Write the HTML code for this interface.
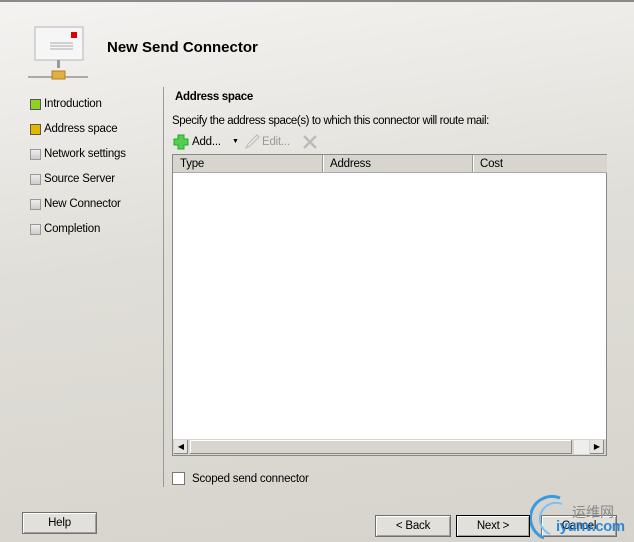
<!DOCTYPE html>
<html><head><style>
body{margin:0;width:634px;height:542px;overflow:hidden;position:relative;font-family:"Liberation Sans",sans-serif;font-size:11.5px;color:#000;
background:linear-gradient(172deg,#f4f3f1 0%,#eceae6 20%,#e0ded8 45%,#d6d3cc 100%);}
.a{position:absolute;white-space:nowrap}
.n{letter-spacing:-0.2px}
.step{position:absolute;left:30px;font-size:11.5px;height:14px}
.step i{position:absolute;left:0;top:1px;width:9px;height:9px;border:1px solid #999;background:linear-gradient(#eee,#ccc)}
.step span{position:absolute;left:14px;top:0px;white-space:nowrap}
.btn{position:absolute;height:20px;border:1px solid #707070;background:#e2e0da;box-shadow:inset 1px 1px 0 #fff,inset -1px -1px 0 #a0a0a0;text-align:center;line-height:20px;font-size:11.5px}
</style></head><body>
<div class="a" style="left:0;top:0;width:634px;height:2px;background:#8a8a8a"></div>
<svg class="a" style="left:26px;top:26px" width="64" height="56">
<rect x="9" y="1" width="48" height="33" fill="#f6f6f6" stroke="#b5b5b5"/>
<rect x="45" y="6" width="6" height="6" fill="#d00"/>
<line x1="24" y1="17" x2="47" y2="17" stroke="#aaa"/><line x1="24" y1="20" x2="47" y2="20" stroke="#aaa"/><line x1="24" y1="23" x2="47" y2="23" stroke="#aaa"/>
<rect x="31" y="34" width="3" height="8" fill="#999"/>
<line x1="2" y1="51" x2="62" y2="51" stroke="#aaa" stroke-width="2"/>
<rect x="26" y="45" width="13" height="8" fill="#e0b040" stroke="#b08020"/>
</svg>
<div class="a" style="left:107px;top:39px;font-size:15px;font-weight:bold">New Send Connector</div>
<div class="step n" style="top:98px"><i style="background:#8fd020;border-color:#556"></i><span>Introduction</span></div>
<div class="step n" style="top:123px"><i style="background:#e0b800;border-color:#654"></i><span>Address space</span></div>
<div class="step n" style="top:148px"><i></i><span>Network settings</span></div>
<div class="step n" style="top:173px"><i></i><span>Source Server</span></div>
<div class="step n" style="top:198px"><i></i><span>New Connector</span></div>
<div class="step n" style="top:223px"><i></i><span>Completion</span></div>
<div class="a" style="left:163px;top:87px;width:1px;height:400px;background:#999"></div>
<div class="a" style="left:175px;top:91px;font-weight:bold;font-size:11.5px;letter-spacing:-0.3px">Address space</div>
<div class="a" style="left:172px;top:115px;font-size:11.5px;letter-spacing:-0.4px">Specify the address space(s) to which this connector will route mail:</div>
<svg class="a" style="left:173px;top:134px" width="16" height="16"><path d="M5 1h6v4h4v6h-4v4h-6v-4h-4v-6h4z" fill="#5c5" stroke="#2a2"/></svg>
<div class="a n" style="left:192px;top:136px">Add...</div>
<div class="a" style="left:232px;top:138px;font-size:7px">▼</div>
<svg class="a" style="left:244px;top:134px" width="16" height="16"><path d="M2 14l2-4 9-9 2 2-9 9z" fill="none" stroke="#bbb"/></svg>
<div class="a n" style="left:262px;top:136px;color:#999">Edit...</div>
<svg class="a" style="left:302px;top:134px" width="16" height="16"><path d="M2 2l12 12M14 2L2 14" stroke="#bbb" stroke-width="2.5"/></svg>
<div class="a" style="left:172px;top:154px;width:433px;height:300px;border:1px solid #888;background:#fff"></div>
<div class="a" style="left:173px;top:155px;width:434px;height:17px;background:#d8d5ce;border-bottom:1px solid #aaa"></div>
<div class="a n" style="left:180px;top:158px">Type</div>
<div class="a" style="left:322px;top:155px;width:1px;height:17px;background:#999;border-right:1px solid #fff"></div>
<div class="a n" style="left:330px;top:158px">Address</div>
<div class="a" style="left:472px;top:155px;width:1px;height:17px;background:#999;border-right:1px solid #fff"></div>
<div class="a n" style="left:480px;top:158px">Cost</div>
<div class="a" style="left:173px;top:439px;width:433px;height:16px;background:#d8d5ce"></div>
<div class="a" style="left:174px;top:440px;width:14px;height:14px;background:#e6e4df;box-shadow:inset -1px -1px 0 #888;font-size:8px;line-height:14px;text-align:center">◀</div>
<div class="a" style="left:190px;top:440px;width:382px;height:14px;background:#d8d5ce;box-shadow:inset -1px -1px 0 #888,inset 1px 1px 0 #fff"></div>
<div class="a" style="left:574px;top:440px;width:15px;height:14px;background:#eee"></div>
<div class="a" style="left:590px;top:440px;width:14px;height:14px;background:#e6e4df;box-shadow:inset -1px -1px 0 #888;font-size:8px;line-height:14px;text-align:center">▶</div>
<div class="a" style="left:172px;top:472px;width:11px;height:11px;border:1px solid #777;background:#fff"></div>
<div class="a n" style="left:192px;top:473px">Scoped send connector</div>
<div class="btn n" style="left:22px;top:512px;width:73px">Help</div>
<div class="btn n" style="left:375px;top:515px;width:74px">&lt; Back</div>
<div class="btn n" style="left:456px;top:515px;width:72px;border-color:#000">Next &gt;</div>
<div class="btn n" style="left:541px;top:515px;width:74px">Cancel</div>
<svg class="a" style="left:530px;top:494px" width="40" height="48"><path d="M30 4A20 20 0 0 0 14 44" fill="none" stroke="#3a9ae0" stroke-width="3"/><path d="M32 10A14 14 0 0 0 20 40" fill="none" stroke="#7cc0f0" stroke-width="2"/></svg>
<div class="a" style="left:572px;top:502px;color:#888;font-size:14px;font-family:'Noto Sans CJK SC',sans-serif">运维网</div>
<div class="a" style="left:556px;top:518px;color:#1a7fd8;font-size:15px;font-weight:bold;letter-spacing:-0.5px;opacity:0.9">iyunv.com</div>
</body></html>
